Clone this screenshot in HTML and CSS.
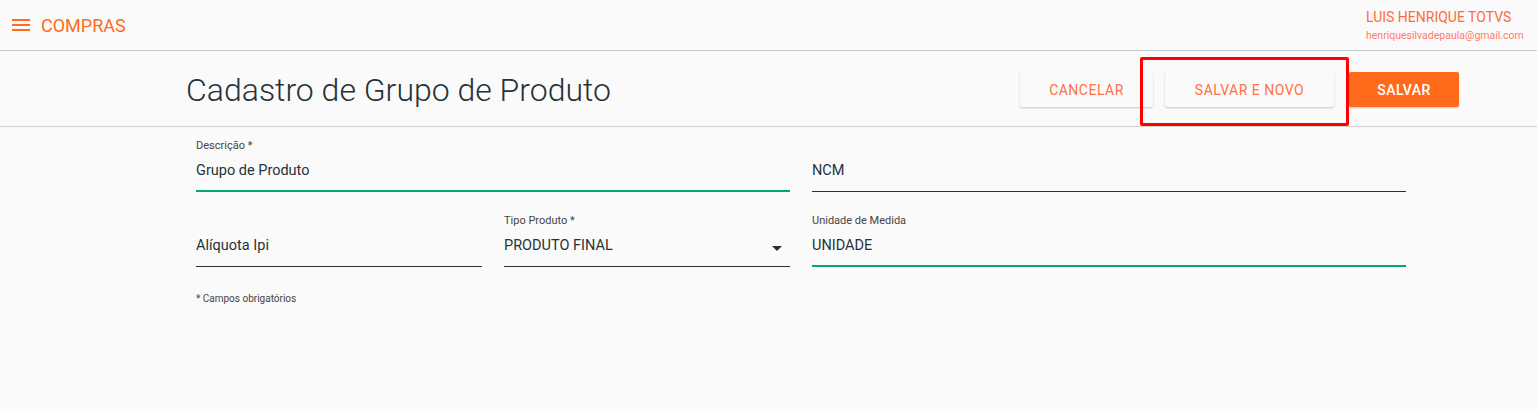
FILE: index.html
```html
<!DOCTYPE html>
<html lang="pt-BR">
<head>
<meta charset="utf-8">
<title>Compras</title>
<link rel="stylesheet" href="styles.css">
</head>
<body>
<header class="topbar">
  <div class="brand">
    <svg class="menu-icon" width="18" height="12" viewBox="0 0 18 12"><rect x="0" y="0" width="18" height="2" fill="#ff6b1a"/><rect x="0" y="5" width="18" height="2" fill="#ff6b1a"/><rect x="0" y="10" width="18" height="2" fill="#ff6b1a"/></svg>
    <span class="brand-name">COMPRAS</span>
  </div>
  <div class="user">
    <div class="user-name">LUIS HENRIQUE TOTVS</div>
    <div class="user-mail">henriquesilvadepaula@gmail.com</div>
  </div>
</header>
<section class="titlebar">
  <h1 class="title">Cadastro de Grupo de Produto</h1>
  <div class="actions">
    <button class="btn btn-flat">CANCELAR</button>
    <div class="highlight-wrap">
      <button class="btn btn-flat btn-wide">SALVAR E NOVO</button>
      <span class="highlight"></span>
    </div>
    <button class="btn btn-primary">SALVAR</button>
  </div>
</section>
<main class="form">
  <div class="grid">
    <div class="field span2 focused">
      <label class="label">Descrição *</label>
      <div class="value">Grupo de Produto</div>
    </div>
    <div class="field span2">
      <label class="label">&nbsp;</label>
      <div class="value">NCM</div>
    </div>
    <div class="field">
      <label class="label">&nbsp;</label>
      <div class="value">Alíquota Ipi</div>
    </div>
    <div class="field select">
      <label class="label">Tipo Produto *</label>
      <div class="value">PRODUTO FINAL<span class="caret"></span></div>
    </div>
    <div class="field span2 focused">
      <label class="label">Unidade de Medida</label>
      <div class="value">UNIDADE</div>
    </div>
  </div>
  <p class="note">* Campos obrigatórios</p>
</main>
</body>
</html>
```
FILE: styles.css
```css
* { box-sizing: border-box; }
html, body { margin: 0; padding: 0; }
body {
  background: #fafafa;
  font-family: Roboto, "Open Sans", sans-serif;
  color: #263238;
  width: 1537px;
  height: 411px;
  overflow: hidden;
}
.topbar {
  height: 51px;
  border-bottom: 1px solid #c8cccc;
  display: flex;
  justify-content: space-between;
  align-items: flex-start;
  padding: 0 12px;
}
.brand {
  display: flex;
  align-items: center;
  height: 50px;
}
.menu-icon { display: block; margin-right: 11px; }
.brand-name {
  font-size: 18px;
  color: #ff6b1a;
}
.user {
  padding-top: 7px;
  width: 159px;
}
.user-name {
  font-size: 14px;
  color: #ff6b3a;
  line-height: 20px;
  white-space: nowrap;
}
.user-mail {
  font-size: 10.5px;
  color: #ff7a6a;
  line-height: 17px;
  white-space: nowrap;
}
.titlebar {
  height: 76px;
  border-bottom: 1px solid #d0d0d0;
  display: flex;
  align-items: center;
  justify-content: space-between;
  padding: 0 78px 0 186px;
}
.title {
  margin: 0;
  font-weight: 300;
  font-size: 32px;
  color: #263238;
  padding-top: 2px;
}
.actions {
  display: flex;
  align-items: center;
  gap: 12px;
  padding-top: 2px;
}
.btn {
  height: 35px;
  border: none;
  border-radius: 2px;
  font-family: inherit;
  font-size: 14px;
  letter-spacing: 0.5px;
  cursor: pointer;
}
.btn-flat {
  background: #fafafa;
  color: #ff7043;
  width: 133px;
  box-shadow: 0 1px 2px rgba(0,0,0,0.2);
}
.btn-wide { width: 169px; }
.btn-primary {
  background: #ff6b1a;
  color: #fff;
  width: 110px;
  margin-left: 3px;
  font-weight: 500;
  box-shadow: 0 1px 2px rgba(0,0,0,0.2);
}
.highlight-wrap { position: relative; }
.highlight {
  position: absolute;
  left: -25px;
  top: -15px;
  width: 209px;
  height: 69px;
  border: 3px solid #ff0000;
  border-radius: 2px;
  pointer-events: none;
}
.form { padding: 12px 133px 0 196px; }
.grid {
  display: grid;
  grid-template-columns: repeat(4, 285.5px);
  column-gap: 22.5px;
  row-gap: 22px;
}
.span2 { grid-column: span 2; }
.field { position: relative; }
.label {
  display: block;
  font-size: 11px;
  color: #444;
  line-height: 14px;
  height: 14px;
}
.value {
  font-size: 14.5px;
  line-height: 20px;
  padding: 8px 0 10px;
  border-bottom: 1px solid #263238;
  color: #263238;
  position: relative;
}
.focused .value {
  border-bottom: 2px solid #00a676;
  padding-bottom: 9px;
}
.caret {
  position: absolute;
  right: 8px;
  top: 18px;
  width: 0;
  height: 0;
  border-left: 5px solid transparent;
  border-right: 5px solid transparent;
  border-top: 5px solid #263238;
}
.note {
  margin: 26px 0 0;
  font-size: 10px;
  color: #444;
}
```
